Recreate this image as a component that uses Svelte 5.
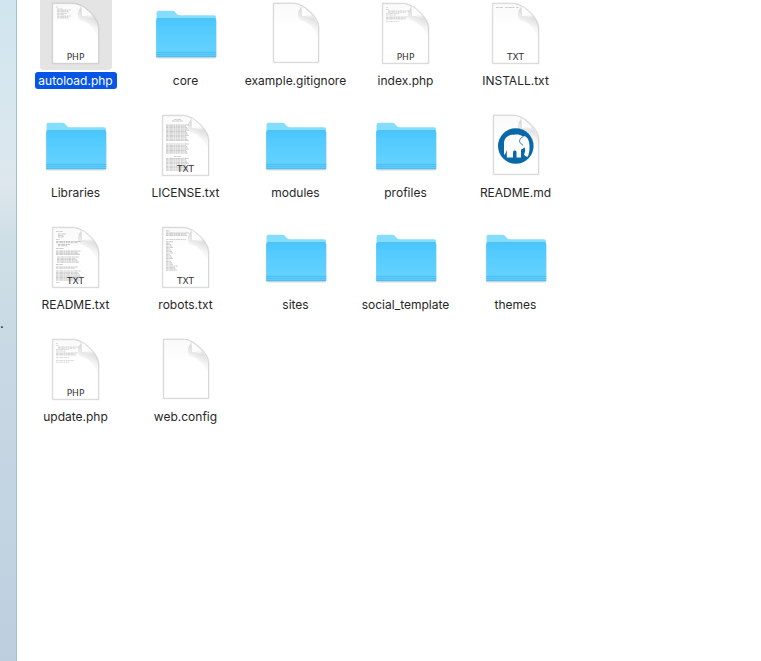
<script>
    // Rows of miniature text, as [x, y, width]
    const rows = (x, width, from, to, step = 1.4) => {
        const out = [];
        for (let y = from; y <= to; y += step) {
            out.push([x, y, width - (out.length * 7) % 4]);
        }
        return out;
    };

    const phpLines = [
        [16, 9.3, 2], [16, 11.4, 3],
        ...rows(18, 21, 13, 14.2, 1.2),
        ...rows(16, 13, 15.6, 17, 1.4),
        ...rows(16, 22, 19, 21, 1),
        [16, 23.4, 13]
    ];

    const lines = {
        autoload: [[16, 9, 2], [17, 10.8, 5], ...rows(17, 14, 12, 14, 1), ...rows(17, 10, 15.4, 17, 1.2), ...rows(17, 14, 18, 20, 1)],
        index: phpLines,
        install: [[16, 9.6, 7], [25, 9.6, 10], [36, 9.6, 3]],
        license: [
            [24, 9.3, 7], [22, 11, 11],
            ...rows(16, 23, 15, 31, 1.3),
            ...rows(16, 23, 34, 44, 1.3),
            [24, 46.4, 7],
            ...rows(16, 23, 48.5, 61, 1.3)
        ],
        readme: [
            [16, 9.7, 7], ...rows(18, 8, 12, 15, 1.4), [16, 17.3, 4],
            ...rows(16, 25, 19.5, 21.5, 1.2), ...rows(18, 12, 22.5, 24.5, 1.2),
            [16, 26.5, 8], ...rows(16, 25, 29, 33, 1.2), ...rows(17, 22, 35, 41, 1.3),
            [16, 42.5, 7], ...rows(16, 22, 45, 47, 1.2), ...rows(16, 25, 49, 59, 1.3),
            [16, 60.7, 4]
        ],
        robots: [
            [16, 9, 4], ...rows(16, 23, 11, 14.5, 1.2), [16, 17.3, 20],
            ...rows(16, 7, 19.8, 43, 1.4), ...rows(16, 12, 44, 48.6, 1.4)
        ],
        update: [...phpLines, [16, 26.4, 18], [16, 28.2, 13]]
    };

    const files = [
        { name: 'autoload.php', kind: 'PHP', text: lines.autoload },
        { name: 'core', kind: 'folder' },
        { name: 'example.gitignore', kind: 'blank' },
        { name: 'index.php', kind: 'PHP', text: lines.index },
        { name: 'INSTALL.txt', kind: 'TXT', text: lines.install },
        { name: 'Libraries', kind: 'folder' },
        { name: 'LICENSE.txt', kind: 'TXT', text: lines.license },
        { name: 'modules', kind: 'folder' },
        { name: 'profiles', kind: 'folder' },
        { name: 'README.md', kind: 'elephant' },
        { name: 'README.txt', kind: 'TXT', text: lines.readme },
        { name: 'robots.txt', kind: 'TXT', text: lines.robots },
        { name: 'sites', kind: 'folder' },
        { name: 'social_template', kind: 'folder' },
        { name: 'themes', kind: 'folder' },
        { name: 'update.php', kind: 'PHP', text: lines.update },
        { name: 'web.config', kind: 'blank' }
    ];

    // Typed documents are a touch larger than plain ones
    const pages = {
        typed: 'M12.7 5.6H33C43 5.6 58.5 20 58.5 30V65.3H12.7Z',
        plain: 'M13.6 5.4H34C43 5.4 58.5 19 58.5 29V64.3H13.6Z'
    };

    let selected = $state('autoload.php');
</script>

<!-- Shared gradients -->
<svg class="defs" width="0" height="0" aria-hidden="true">
    <defs>
        <linearGradient id="front" x1="0" y1="0" x2="0" y2="1">
            <stop offset="0" stop-color="#48c5fc" />
            <stop offset="0.25" stop-color="#53cbfe" />
            <stop offset="0.8" stop-color="#62d1ff" />
            <stop offset="1" stop-color="#5acbfc" />
        </linearGradient>
        <linearGradient id="page" x1="0" y1="0" x2="0" y2="1">
            <stop offset="0" stop-color="#fafafa" />
            <stop offset="0.4" stop-color="#ffffff" />
        </linearGradient>
        <linearGradient id="shade" gradientUnits="userSpaceOnUse" x1="49" y1="17" x2="41" y2="31">
            <stop offset="0" stop-color="#000" stop-opacity="0.13" />
            <stop offset="0.5" stop-color="#000" stop-opacity="0.04" />
            <stop offset="1" stop-color="#000" stop-opacity="0" />
        </linearGradient>
        <linearGradient id="curl" gradientUnits="userSpaceOnUse" x1="42" y1="18" x2="49" y2="11">
            <stop offset="0" stop-color="#ffffff" />
            <stop offset="0.7" stop-color="#fcfcfc" />
            <stop offset="1" stop-color="#e6e6e6" />
        </linearGradient>
    </defs>
</svg>

<div class="screen">
    <aside class="desktop"><span>.</span></aside>
    <main class="pane">
        <div class="grid">
            {#each files as file}
                <button
                    type="button"
                    class="file"
                    class:selected={selected === file.name}
                    aria-pressed={selected === file.name}
                    onclick={() => (selected = file.name)}
                >
                    <svg class="icon" viewBox="0 0 72 72" aria-hidden="true">
                        {#if file.kind === 'folder'}
                            <path class="folder-shadow" d="M6 22H66.4V59Q66.4 60.6 64.5 60.6H8Q6 60.6 6 59Z" />
                            <path class="folder-back" d="M6.5 24V15Q6.5 12.8 8.5 12.8H22.5Q24 12.8 25 14L27.3 16.4Q28.2 17.2 29.5 17.2H64Q66 17.2 66 19.2V30H6.5Z" />
                            <path fill="url(#front)" d="M6.2 22Q6.2 20.2 8 20.2H64.4Q66.2 20.2 66.2 22V57.8Q66.2 59.3 64.7 59.3H7.7Q6.2 59.3 6.2 57.8Z" />
                            <path class="folder-edge" d="M7.5 20.5H65" />
                            <path class="folder-ribs" d="M6.2 54.5H66.2M6.2 56.5H66.2M6.2 58.5H66.2" />
                        {:else}
                            {@const outline = file.text ? pages.typed : pages.plain}
                            <path class="page-shadow" d={outline} />
                            <path class="page" fill="url(#page)" d={outline} />
                            {#if file.text}
                                {#each file.text as [x, y, width]}
                                    <path class="line" class:faint={file.kind === 'PHP'} d="M{x} {y}h{width}" />
                                {/each}
                            {/if}
                            <path fill="url(#shade)" d="M41 9L41.5 18.8L54 19.5C57 24 58.2 27 58.2 30V42C56 32 50 25 40 22C37 20 37 14 41 9Z" />
                            {#if file.kind === 'elephant'}
                                <circle class="badge" cx="35.8" cy="36" r="17.8" />
                                <path class="elephant" d="M24 45V34C24 28 28 24.6 34 24.8C37 24.2 40.5 24.6 42.5 26.2C46 25.5 48 28 49 32C50 37 49.5 42 48 46.5C46.5 47 45 46 44 44.5C45.5 42 45.5 39 44.3 37.2C43 38.8 41.5 39.3 41 39.5V47.5H36.5V42C36.2 40 33.5 40 33 42V47.5H26.8V40C26 41.5 25.8 44 24 45Z" />
                                <path class="ear" d="M43.5 26.5C40.5 28 38.8 30 40 32.5C41 34.5 42.5 33.8 42.8 35.5" />
                            {/if}
                            <path class="curl" fill="url(#curl)" d="M41 7.5C41.8 11 41.5 15 41.5 18.8C46 18.3 50.5 17.6 53.5 18.8C50 14 45.5 10 41 7.5Z" />
                            {#if file.kind === 'PHP' || file.kind === 'TXT'}
                                <text class="kind" x="35.5" y="62">{file.kind}</text>
                            {/if}
                        {/if}
                    </svg>
                    <span class="name">{file.name}</span>
                </button>
            {/each}
        </div>
    </main>
</div>

<style>
    :global(body) {
        margin: 0;
        background: #ffffff;
    }

    .defs {
        position: absolute;
    }

    .screen {
        display: flex;
        min-height: 100vh;
        font-family: Inter, 'Liberation Sans', sans-serif;
    }

    .desktop {
        flex: none;
        box-sizing: border-box;
        width: 17px;
        padding-top: 314px;
        border-right: 1px solid #a8bccc;
        background: linear-gradient(#d0e5ef, #d7e7ee 15%, #dde7ed 28%, #cfdfe6 36%, #c8d8e4 55%, #bdcfdf);
        color: #222222;
        font-size: 13px;
        line-height: 18px;
    }

    .pane {
        flex: 1;
        overflow: hidden;
        padding-left: 4px;
    }

    /* The listing is scrolled by a hair */
    .grid {
        display: grid;
        grid-template-columns: repeat(5, 110px);
        grid-auto-rows: 112px;
        margin-top: -2px;
    }

    .file {
        display: flex;
        flex-direction: column;
        align-items: center;
        gap: 2px;
        padding: 0;
        border: 0;
        background: none;
        color: #262626;
        font: inherit;
    }

    .icon {
        flex: none;
        width: 72px;
        height: 72px;
        border-radius: 4px;
    }

    .name {
        padding: 0 4px 0 3px;
        border-radius: 3px;
        font-size: 12px;
        line-height: 17px;
        white-space: nowrap;
    }

    .selected .icon {
        background: #e4e4e4;
    }

    .selected .name {
        background: #0655e6;
        color: #ffffff;
    }

    .folder-shadow {
        fill: #000000;
        opacity: 0.15;
    }

    .folder-back {
        fill: #86dcfb;
    }

    .folder-edge {
        stroke: #45bcf0;
        stroke-width: 0.6;
    }

    .folder-ribs {
        stroke: #4bbcee;
        stroke-width: 1;
        opacity: 0.8;
    }

    .page-shadow {
        fill: none;
        stroke: #000000;
        stroke-opacity: 0.08;
        stroke-width: 2;
    }

    .page {
        stroke: #cccccc;
        stroke-width: 0.7;
    }

    .curl {
        stroke: #d0d0d0;
        stroke-width: 0.5;
    }

    .line {
        stroke: #777777;
        stroke-width: 0.6;
        stroke-dasharray: 2 0.4 1.2 0.3 3 0.5;
        opacity: 0.65;
    }

    .faint {
        opacity: 0.45;
    }

    .kind {
        fill: #333333;
        font-family: 'DejaVu Sans', sans-serif;
        font-size: 9px;
        text-anchor: middle;
    }

    .badge {
        fill: #0868a8;
    }

    .elephant {
        fill: #ffffff;
    }

    .ear {
        fill: none;
        stroke: #0868a8;
        stroke-width: 0.9;
    }
</style>
